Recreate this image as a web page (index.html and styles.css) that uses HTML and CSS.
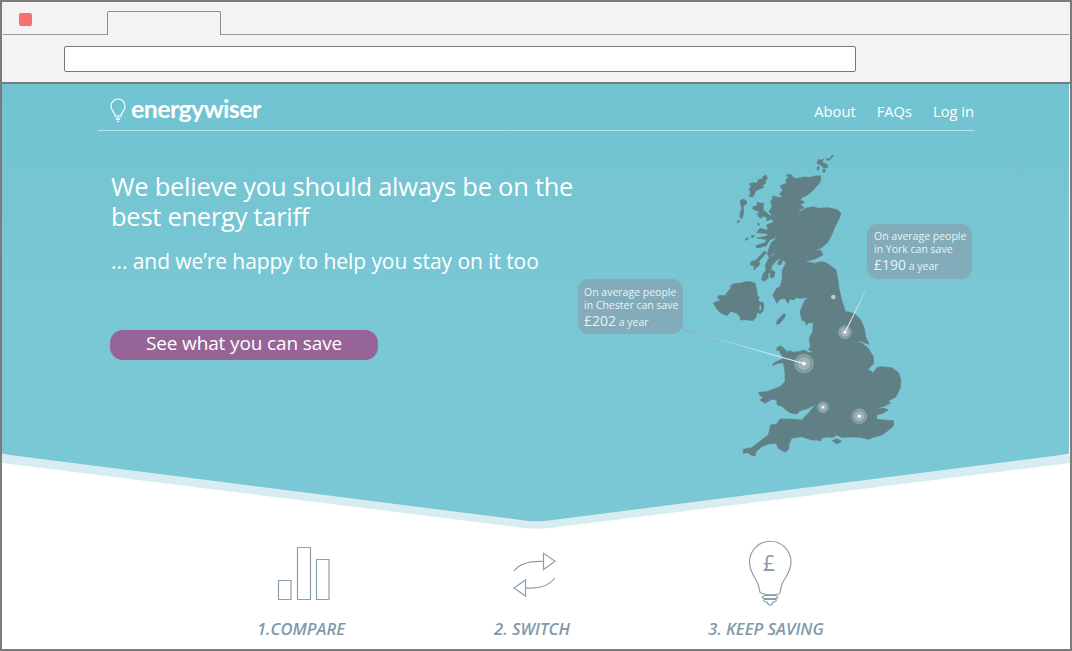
FILE: index.html
```html
<!DOCTYPE html>
<html lang="en">
<head>
<meta charset="utf-8">
<title>energywiser</title>
<link rel="stylesheet" href="styles.css">
</head>
<body>
<div class="window">
  <header class="chrome">
    <div class="tabs"><span class="close"></span><span class="tab"></span><span class="strip"></span></div>
    <div class="toolbar"><div class="address"></div></div>
  </header>
  <main class="page">
    <svg class="backdrop" viewBox="0 0 1068 446" aria-hidden="true">
      <defs><linearGradient id="sky" x1="0" y1="0" x2="0" y2="1"><stop offset="0" stop-color="#71c3d1"/><stop offset=".5" stop-color="#79c7d5"/><stop offset="1" stop-color="#7bc7d5"/></linearGradient></defs>
      <path fill="#d7edf2" d="M0 371H1068V379L552 443.500Q534 446 518 443.500L0 379Z"/>
      <path fill="url(#sky)" d="M0 0H1067V370L551 436Q534 438.500 519 436L0 370Z"/>
    </svg>
    <nav class="nav">
      <a class="logo"><svg class="logo-bulb" viewBox="0 0 16 25"><path d="M5 18C5 14 1 13 1 8A7 7 0 0 1 15 8C15 13 11 14 11 18ZM5.500 20H10.500M6 21.500H10M7 23.500H9" fill="none" stroke="#fff" stroke-width="1.200"/></svg><span class="brand">energywiser</span></a>
      <div class="links"><a>About</a><a>FAQs</a><a>Log in</a></div>
    </nav>
    <section class="hero">
      <div class="pitch">
        <h1>We believe you should always be on the<br>best energy tariff</h1>
        <p>... and we’re happy to help you stay on it too</p>
        <a class="cta">See what you can save</a>
      </div>
      <div class="map">
        <svg class="uk" viewBox="570 145 410 320" role="img" aria-label="Savings across the United Kingdom">
          <defs>
            <linearGradient id="ray1" gradientUnits="userSpaceOnUse" x1="683" y1="329" x2="804" y2="364"><stop offset="0" stop-color="#83aebd"/><stop offset=".5" stop-color="#b5d9e0"/><stop offset="1" stop-color="#fff"/></linearGradient>
            <linearGradient id="ray2" gradientUnits="userSpaceOnUse" x1="872" y1="278" x2="845" y2="332"><stop offset="0" stop-color="#83b4c2"/><stop offset=".5" stop-color="#cde4e9"/><stop offset="1" stop-color="#fff"/></linearGradient>
          </defs>
          <g class="land" transform="translate(700 145) scale(.33333)">
            <path d="M262 88L275 90 280 98 288 101 310 96 330 97 345 93 360 92 363 98 360 112 340 135 322 150 308 157 300 164 314 172 300 179 313 188 296 196 300 200 320 189 340 185 355 190 385 188 412 194 423 205 418 220 405 245 395 270 383 292 365 308 340 318 362 316 369 330 345 342 325 347 315 350 345 355 362 350 375 352 392 362 408 375 413 400 417 430 425 465 433 490 436 500 450 502 465 507 482 525 493 550 497 575 507 598 495 594 485 588 462 590 485 593 505 610 520 635 521 655 510 667 503 673 520 683 530 668 545 665 575 668 595 682 603 705 600 730 588 755 565 768 572 774 555 783 528 791 553 790 565 795 550 804 530 810 530 823 550 825 580 827 580 843 560 860 545 870 520 877 505 883 480 877 455 876 425 877 410 870 400 877 380 876 365 880 362 888 350 885 335 885 305 875 275 880 268 895 265 915 255 921 235 910 228 895 205 897 185 905 168 920 165 933 153 930 145 923 130 925 130 913 155 908 185 885 205 870 212 840 230 837 240 822 265 822 305 825 325 805 348 777 325 790 300 797 290 807 270 803 255 793 245 783 232 780 230 765 215 763 195 775 180 765 190 758 178 750 176 742 200 740 240 725 255 710 255 680 250 653 230 656 218 662 222 653 245 643 250 638 243 632 255 623 270 617 280 622 295 620 315 615 325 623 340 620 325 614 331 605 328 580 338 560 340 533 325 533 320 541 315 529 306 526 303 515 300 500 312 470 318 462 338 457 300 460 290 458 280 465 270 462 264 475 255 460 240 463 230 475 225 462 218 450 230 430 240 425 247 400 246 378 258 353 250 345 242 360 232 357 243 338 230 346 215 363 212 380 205 385 204 400 192 409 185 404 188 390 198 375 196 360 205 343 212 334 238 321 215 328 207 337 202 327 207 310 213 294 235 275 210 284 198 303 170 309 168 302 195 293 200 284 170 279 198 274 205 266 170 263 180 250 205 256 200 240 222 230 214 222 200 228 202 217 215 210 207 200 216 185 212 170 219 160 217 153 240 158 247 151 238 148 248 136 240 123 260 115 258 102 267 100 260 92Z"/>
            <path d="M199 90L202 101 195 109 198 115 188 120 190 128 178 132 168 137 159 155 148 155 152 141 147 134 153 126 148 116 162 113 170 115 176 103 185 103 190 94ZM121 166L129 163 140 168 139 177 130 183 131 201 127 220 120 219 121 200 126 190 122 180ZM173 171L183 175 191 174 189 194 204 207 212 216 205 219 190 214 180 220 171 206 181 203 171 198 158 192 160 184 169 184ZM113 227L118 226 117 233 111 233ZM173 234L179 237 175 243ZM155 272L163 270 161 276 154 278ZM137 281L143 278 145 282 136 286ZM189 322L196 318 199 323 182 343 176 348 180 357 168 370 161 375 163 364 151 359 153 350 169 345ZM215 374L225 381 222 396 212 399 210 382ZM378 41L388 42 397 30 401 32 390 44 380 46ZM356 43L363 45 371 42 366 52 382 59 382 68 370 68 363 61 350 54ZM353 63L358 67 355 76 351 74ZM369 73L376 72 374 82 369 82Z"/>
            <path d="M101 416L125 414 135 410 151 410 166 415 168 429 171 438 172 454 179 457 174 463 180 472 188 471 192 480 188 500 180 506 172 501 168 517 158 527 140 524 122 525 119 513 107 503 92 499 81 512 62 504 50 491 40 475 50 470 58 469 60 463 52 459 57 451 74 452 86 437 93 429 92 422ZM249 508L256 507 255 516 247 526 237 537 229 537 232 526ZM231 608L241 602 252 610 260 619 251 628 240 626 240 617 230 616ZM397 887L410 881 425 888 411 897Z"/>
            <path class="lough" d="M179 480L183 480 183 495 178 497Z"/>
          </g>
          <g fill="#fff">
            <circle cx="833.300" cy="297" r="2.300" opacity=".6"/>
            <g class="halo"><circle cx="804" cy="363.600" r="9.500"/><circle cx="804" cy="363.600" r="6"/><circle cx="845" cy="332.300" r="6.500"/><circle cx="845" cy="332.300" r="4"/><circle cx="823" cy="407.300" r="5.600"/><circle cx="823" cy="407.300" r="3.300"/><circle cx="859.300" cy="416.300" r="7.500"/><circle cx="859.300" cy="416.300" r="4.500"/></g>
            <circle cx="823" cy="407.300" r="1.200"/><circle cx="859.300" cy="416.300" r="1.700"/><circle cx="804" cy="363.600" r="1.900"/><circle cx="845" cy="332.300" r="1.500"/>
          </g>
          <path d="M682 329L804 363.600" stroke="url(#ray1)"/>
          <path d="M872 278L845 332.300" stroke="url(#ray2)"/>
        </svg>
        <div class="callout chester">On average people<br>in Chester can save<br><b>£202</b> <small>a year</small></div>
        <div class="callout york">On average people<br>in York can save<br><b>£190</b> <small>a year</small></div>
      </div>
    </section>
    <section class="steps">
      <div class="step compare">
        <svg viewBox="0 0 60 66"><path d="M5.500 40.500H18V59.500H5.500ZM24.500 7.500H37.500V59.500H24.500ZM43.500 19.500H56V59.500H43.500Z"/></svg>
        <h2>1.COMPARE</h2>
      </div>
      <div class="step switch">
        <svg viewBox="0 0 60 66"><path d="M12 31C18 23 29 21 41.500 21.500M41.500 13.300V29.500L53 21.300ZM53 38C47 46 36 49 23.500 48M23.500 40V56L12 48Z"/></svg>
        <h2>2. SWITCH</h2>
      </div>
      <div class="step saving">
        <svg viewBox="0 0 60 66"><path d="M21 53C19 53 20 49 18 44C15 37 9.500 32 9.500 22A20.700 20.700 0 0 1 51 22C51 32 45 37 42 44C40 49 41 53 39 54Q30 56 21 53ZM24 55.500H36Q40 58 35 58.500H25Q20 58 24 55.500ZM24 59.500H36Q37 62 33 62Q32 65 30 65T27 62Q23 62 24 59.500Z"/><text class="pound" x="23" y="31">£</text></svg>
        <h2>3. KEEP SAVING</h2>
      </div>
    </section>
  </main>
</div>
</body>
</html>
```
FILE: styles.css
```css
* { box-sizing: border-box; }
body { margin: 0; font-family: "Open Sans", "Noto Sans", sans-serif; }
.window { width: 1072px; height: 651px; border: 2px solid #7b7b7b; overflow: hidden; background: #fff; }
.chrome { height: 82px; background: #f3f3f3; border-bottom: 2px solid #7b7b7b; }
.tabs { display: flex; height: 33px; padding: 0 1px; align-items: flex-end; }
.close { width: 104px; height: 33px; border-bottom: 1px solid #999; }
.close::before { content: ""; display: block; width: 13px; height: 13px; margin: 11px 0 0 16px; border-radius: 2px; background: #f76f6f; }
.tab { width: 114px; height: 24px; border: 1px solid #8d8d8d; border-bottom: 0; border-radius: 2px 2px 0 0; }
.strip { flex: 1; height: 1px; background: #999; }
.toolbar { padding: 11px 0 0 62px; }
.address { width: 792px; height: 26px; background: #fff; border: 1px solid #777; border-radius: 2px; }
.page { position: relative; height: 565px; }
.backdrop { position: absolute; inset: 0 0 auto; width: 1068px; height: 446px; }
.nav { position: relative; width: 876px; height: 47px; margin-left: 96px; padding-left: 12px; display: flex; justify-content: space-between; border-bottom: 1px solid #b8e0e8; color: #fff; }
.logo { display: flex; }
.logo-bulb { width: 16px; height: 25px; margin-top: 14px; }
.brand { margin: 7px 0 0 5px; font: 700 25px/34px Lato, sans-serif; letter-spacing: -.62px; }
.links { display: flex; gap: 21px; padding-top: 17px; font-size: 14.700px; line-height: 20px; }
.hero { position: relative; display: flex; height: 334px; color: #fff; }
.pitch { width: 568px; padding: 40px 0 0 109px; }
h1 { margin: 0; font-size: 25.500px; line-height: 30px; font-weight: 400; white-space: nowrap; letter-spacing: -.27px; }
.pitch p { margin: 14px 0 0; font-size: 21px; line-height: 32px; white-space: nowrap; letter-spacing: -.07px; }
.cta { display: block; width: 268px; height: 30px; margin: 52.500px 0 0 -1px; border-radius: 13px; background: #966496; text-align: center; font-size: 19px; line-height: 27px; letter-spacing: -.13px; }
.map { position: relative; width: 410px; height: 320px; margin-top: 14px; }
.uk { display: block; width: 410px; height: 320px; fill: none; }
.land { fill: #608086; stroke: #608086; stroke-width: 2; }
.land .lough { fill: #79c7d5; stroke: none; }
.halo { fill: #fff; fill-opacity: .22; stroke: #fff; stroke-opacity: .25; stroke-width: .6; }
.callout { position: absolute; width: 105px; height: 55px; padding: 7px 0 0 6px; border-radius: 11px; background: #82acba; color: #e6f4f7; font-size: 10.500px; line-height: 12.500px; white-space: nowrap; }
.callout b { font-size: 14px; line-height: 19px; font-weight: 400; }
.callout small { font-size: 10.500px; }
.chester { left: 8px; top: 134px; }
.york { left: 297px; top: 79px; padding: 6px 0 0 7px; }
.steps { position: relative; display: grid; grid-template-columns: 234px 228px 240px; margin: 75px 0 0 182px; }
.step { display: flex; flex-direction: column; align-items: center; color: #8299a9; }
.step svg { width: 60px; height: 66px; fill: none; stroke: #8aa0af; stroke-width: 1.200; }
.compare svg { margin-left: 4px; }
.saving svg { margin-left: 7px; }
.step .pound { fill: #8299a9; stroke: none; font-size: 21px; }
h2 { margin: 11px 0 0; font-size: 16.600px; line-height: 24px; font-weight: 600; font-style: italic; white-space: nowrap; }
```
